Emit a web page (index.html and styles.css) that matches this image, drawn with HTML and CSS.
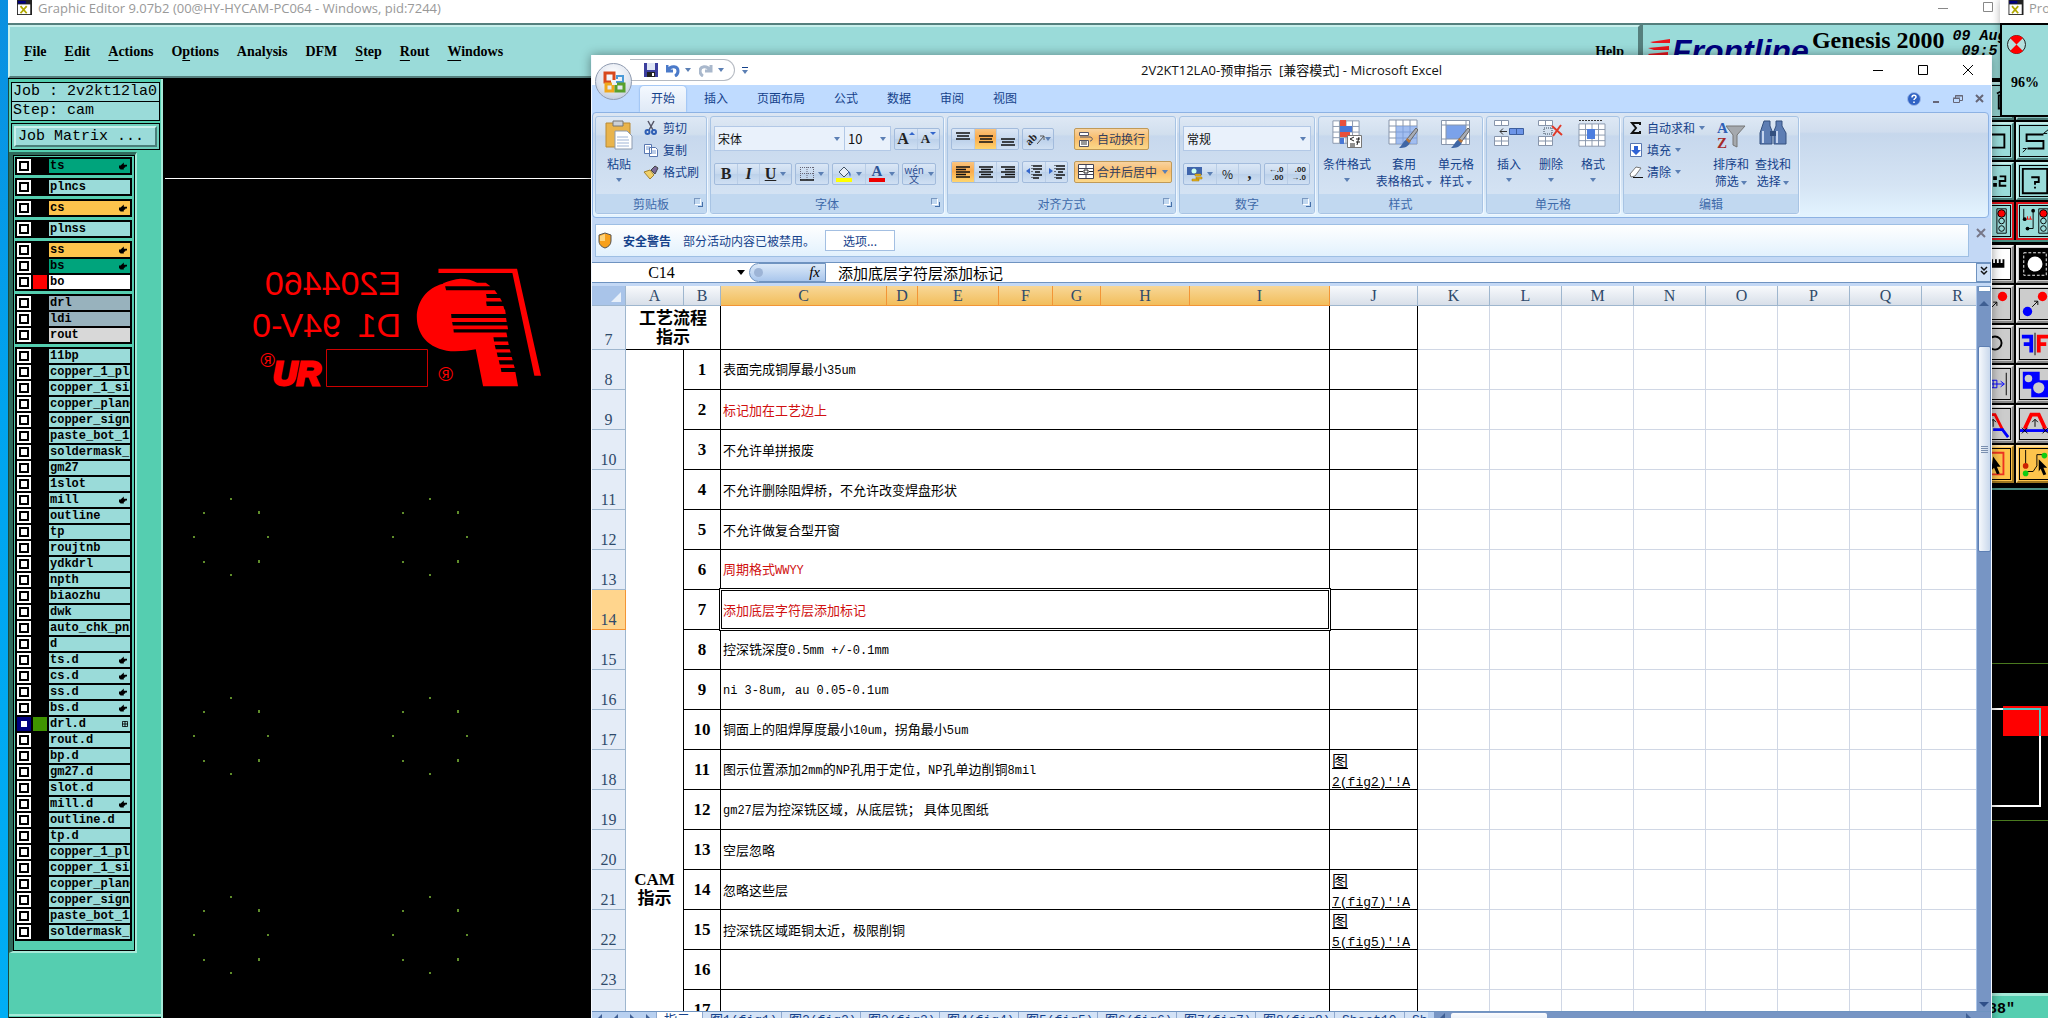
FILE: index.html
```
<!DOCTYPE html>
<html lang="zh-CN">
<head>
  <meta charset="UTF-8">
  <meta name="viewport" content="width=device-width, initial-scale=1">
  <title>2V2KT12LA0-预审指示</title>
  <link rel="stylesheet" href="styles.css">
</head>
<body>
  <svg class="defs" aria-hidden="true">
    <symbol id="hand" viewBox="0 0 10 9"><path d="M0 4h2l4-4v3h4v2H8v1H7v1H6v2H2L0 7z"/></symbol>
    <symbol id="grid" viewBox="0 0 7 7"><path d="M.5.5h6v6h-6zM3.5 0v7M0 3.5h7" fill="none" stroke="#000"/></symbol>
    <symbol id="xwin" viewBox="0 0 17 17"><path d="M0 0h17v17H0z" fill="#222"/><path d="M1 5h14v11H1z" fill="#fff"/><path d="M1 1h9v3H1z" fill="#00007f"/><path d="M4 7l7 8M11 7l-7 8" stroke="#b0a800" stroke-width="2"/></symbol>
    <symbol id="lines-left" viewBox="0 0 14 12"><path d="M0 1h14M0 3.500h10M0 6h14M0 8.500h10M0 11h14" stroke="#111" stroke-width="1.300"/></symbol>
    <symbol id="lines-center" viewBox="0 0 14 12"><path d="M0 1h14M2 3.500h10M0 6h14M2 8.500h10M0 11h14" stroke="#111" stroke-width="1.300"/></symbol>
    <symbol id="lines-right" viewBox="0 0 14 12"><path d="M0 1h14M4 3.500h10M0 6h14M4 8.500h10M0 11h14" stroke="#111" stroke-width="1.300"/></symbol>
    <symbol id="three-top" viewBox="0 0 14 16"><path d="M0 2h14M1 5h12M0 8h14" stroke="#111" stroke-width="1.500"/></symbol>
    <symbol id="three-mid" viewBox="0 0 14 16"><path d="M0 5h14M1 8h12M0 11h14" stroke="#111" stroke-width="1.500"/></symbol>
    <symbol id="three-low" viewBox="0 0 14 16"><path d="M0 8h14M1 11h12M0 14h14" stroke="#111" stroke-width="1.500"/></symbol>
    <symbol id="table" viewBox="0 0 30 28"><path d="M1 1h28v24H1z" fill="#fff" stroke="#8795ab"/><path d="M1 7h28M1 13h28M1 19h28M8 1v24M15 1v24M22 1v24" stroke="#8795ab"/></symbol>
    <symbol id="brush" viewBox="0 0 20 22"><path d="M18 1l2 2-8 11-3-2z" fill="#a9adb5" stroke="#666"/><path d="M9 12l3 3c-1 5-6 6-11 6 3-2 4-7 8-9z" fill="#3f66a5"/><path d="M9 11l4 3-2 2-3-3z" fill="#b9773b"/></symbol>
    <symbol id="holes" viewBox="190 495 82 84"><path d="M230 498h2v2h-2zM203 512h2v2h-2zM258 511h2v3h-2zM193 536h2v2h-2zM267 536h2v2h-2zM203 561h2v2h-2zM258 560h2v3h-2zM230 574h2v2h-2z" fill="#5f8d2a"/></symbol>
  </svg>

  <div class="genesis">
    <header class="title-bar">
      <svg class="app-icon"><use href="#xwin"/></svg>
      <span class="title">Graphic Editor 9.07b2 (00@HY-HYCAM-PC064 - Windows, pid:7244)</span>
      <div class="window-buttons">
        <button aria-label="Minimize"><svg width="12" height="12"><path d="M1 7.500h10" stroke="#888"/></svg></button>
        <button aria-label="Maximize"><svg width="12" height="12"><path d="M1.500 1.500h9v9h-9z" fill="none" stroke="#888"/></svg></button>
      </div>
    </header>

    <div class="top">
      <nav class="menu">
        <a href="#"><u>F</u>ile</a>
        <a href="#"><u>E</u>dit</a>
        <a href="#"><u>A</u>ctions</a>
        <a href="#">O<u>p</u>tions</a>
        <a href="#">Analysis</a>
        <a href="#">DFM</a>
        <a href="#"><u>S</u>tep</a>
        <a href="#"><u>R</u>out</a>
        <a href="#"><u>W</u>indows</a>
        <a href="#" class="help">Help</a>
      </nav>
      <div class="brand">
        <svg class="speed" width="24" height="22" viewBox="0 0 24 22"><path d="M2 3l20-3v4H5zM0 9l21-2v4H6zM0 15l20-2v4H2z" fill="#e8141c"/></svg>
        <span class="frontline">Frontline</span>
        <span class="product">Genesis 2000</span>
        <span class="date">09 Aug<br>&nbsp;09:5</span>
      </div>
    </div>

    <div class="work">
      <aside class="sidebar">
        <div class="job">
          <p>Job : 2v2kt12la0</p>
          <p>Step: cam</p>
        </div>
        <div class="matrix"><button>Job Matrix ...</button></div>
        <div class="layers">
          <div class="panel">
            <div class="set">
              <label class="layer green"><input type="checkbox"><i></i><span>ts</span><svg class="mark"><use href="#hand"/></svg></label>
            </div>
            <div class="set">
              <label class="layer"><input type="checkbox"><i></i><span>plncs</span></label>
            </div>
            <div class="set">
              <label class="layer amber"><input type="checkbox"><i></i><span>cs</span><svg class="mark"><use href="#hand"/></svg></label>
            </div>
            <div class="set">
              <label class="layer"><input type="checkbox"><i></i><span>plnss</span></label>
            </div>
            <div class="set">
              <label class="layer amber"><input type="checkbox"><i></i><span>ss</span><svg class="mark"><use href="#hand"/></svg></label>
              <label class="layer green"><input type="checkbox"><i></i><span>bs</span><svg class="mark"><use href="#hand"/></svg></label>
              <label class="layer white"><input type="checkbox"><i class="red"></i><span>bo</span></label>
            </div>
            <div class="set">
              <label class="layer slate"><input type="checkbox"><i></i><span>drl</span></label>
              <label class="layer slate"><input type="checkbox"><i></i><span>ldi</span></label>
              <label class="layer grey"><input type="checkbox"><i></i><span>rout</span></label>
            </div>
            <div class="set">
              <label class="layer"><input type="checkbox"><i></i><span>11bp</span></label>
              <label class="layer"><input type="checkbox"><i></i><span>copper_1_pla</span></label>
              <label class="layer"><input type="checkbox"><i></i><span>copper_1_sig</span></label>
              <label class="layer"><input type="checkbox"><i></i><span>copper_plane</span></label>
              <label class="layer"><input type="checkbox"><i></i><span>copper_signa</span></label>
              <label class="layer"><input type="checkbox"><i></i><span>paste_bot_1</span></label>
              <label class="layer"><input type="checkbox"><i></i><span>soldermask_b</span></label>
              <label class="layer"><input type="checkbox"><i></i><span>gm27</span></label>
              <label class="layer"><input type="checkbox"><i></i><span>1slot</span></label>
              <label class="layer"><input type="checkbox"><i></i><span>mill</span><svg class="mark"><use href="#hand"/></svg></label>
              <label class="layer"><input type="checkbox"><i></i><span>outline</span></label>
              <label class="layer"><input type="checkbox"><i></i><span>tp</span></label>
              <label class="layer"><input type="checkbox"><i></i><span>roujtnb</span></label>
              <label class="layer"><input type="checkbox"><i></i><span>ydkdrl</span></label>
              <label class="layer"><input type="checkbox"><i></i><span>npth</span></label>
              <label class="layer"><input type="checkbox"><i></i><span>biaozhu</span></label>
              <label class="layer"><input type="checkbox"><i></i><span>dwk</span></label>
              <label class="layer"><input type="checkbox"><i></i><span>auto_chk_pnl</span></label>
              <label class="layer"><input type="checkbox"><i></i><span>d</span></label>
              <label class="layer"><input type="checkbox"><i></i><span>ts.d</span><svg class="mark"><use href="#hand"/></svg></label>
              <label class="layer"><input type="checkbox"><i></i><span>cs.d</span><svg class="mark"><use href="#hand"/></svg></label>
              <label class="layer"><input type="checkbox"><i></i><span>ss.d</span><svg class="mark"><use href="#hand"/></svg></label>
              <label class="layer"><input type="checkbox"><i></i><span>bs.d</span><svg class="mark"><use href="#hand"/></svg></label>
              <label class="layer"><input type="checkbox" checked><i class="lime"></i><span>drl.d</span><svg class="mark small"><use href="#grid"/></svg></label>
              <label class="layer"><input type="checkbox"><i></i><span>rout.d</span></label>
              <label class="layer"><input type="checkbox"><i></i><span>bp.d</span></label>
              <label class="layer"><input type="checkbox"><i></i><span>gm27.d</span></label>
              <label class="layer"><input type="checkbox"><i></i><span>slot.d</span></label>
              <label class="layer"><input type="checkbox"><i></i><span>mill.d</span><svg class="mark"><use href="#hand"/></svg></label>
              <label class="layer"><input type="checkbox"><i></i><span>outline.d</span></label>
              <label class="layer"><input type="checkbox"><i></i><span>tp.d</span></label>
              <label class="layer"><input type="checkbox"><i></i><span>copper_1_pla</span></label>
              <label class="layer"><input type="checkbox"><i></i><span>copper_1_sig</span></label>
              <label class="layer"><input type="checkbox"><i></i><span>copper_plane</span></label>
              <label class="layer"><input type="checkbox"><i></i><span>copper_signa</span></label>
              <label class="layer"><input type="checkbox"><i></i><span>paste_bot_1</span></label>
              <label class="layer"><input type="checkbox"><i></i><span>soldermask_b</span></label>
            </div>
          </div>
        </div>
        <div class="sidebar-end"></div>
      </aside>

      <main class="canvas">
        <svg width="428" height="939" viewBox="163 79 428 939">
          <path d="M165 178.500h426" stroke="#fff"/>
          <g fill="#f00" font-family="Liberation Sans, sans-serif">
            <g transform="translate(401 0) scale(-1 1)" font-size="34">
              <text x="0" y="295">E204460</text>
              <text x="0" y="337">D1</text>
              <text x="60" y="337">94V-0</text>
            </g>
            <g transform="translate(453 0) scale(-1 1)" font-size="20">
              <text x="0" y="381">®</text>
              <text x="178" y="367">®</text>
            </g>
            <text x="273" y="385" font-size="33" font-weight="bold" font-style="italic" stroke="#f00" stroke-width="3">UR</text>
          </g>
          <path d="M326.500 349.500h101v37h-101z" fill="none" stroke="#c00"/>
          <!-- striped head and bent arm of the board logo -->
          <g transform="translate(230 250) scale(.333)" fill="#f00">
            <path d="M626 56h236l72 322h-20L848 69H626z"/>
            <path d="M640 100c20-8 35-13 52-14 20 0 38 5 50 12H645zM640 101c-50 12-79 55-79 100 0 60 45 103 115 103 24 0 45-3 62-6l22 111h105l-8-43h-42l-2-12h42l-3-10h-42l-3-13h42l-3-10h-42l-3-13h42l-3-10h-42l-3-13h42l-2-10h-42l-2-13h42l-3-14H672l-1-10h164l-2-11H669l-2-11h164l-2-12H665l-1-12h164l-2-13H663h161l-3-11h-50l-2-13h48l-6-11h-40l-2-12h34l-8-11H649l-3-12h136l-14-11H642z"/>
          </g>
          <use href="#holes" x="190" y="495" width="82" height="84"/>
          <use href="#holes" x="389" y="495" width="82" height="84"/>
          <use href="#holes" x="190" y="694" width="82" height="84"/>
          <use href="#holes" x="389" y="694" width="82" height="84"/>
          <use href="#holes" x="190" y="893" width="82" height="84"/>
          <use href="#holes" x="389" y="893" width="82" height="84"/>
        </svg>
      </main>

      <aside class="tools">
        <div class="tool-grid">
          <button aria-label="Zoom out"><svg viewBox="0 0 32 32"><path d="M20 10h8v14h-8zM18 8l12-6" fill="none" stroke="#000" stroke-width="2"/></svg></button>
          <button aria-label="Zoom in"><svg viewBox="0 0 32 32"><path d="M6 10h20v14H6z" fill="none" stroke="#000" stroke-width="2"/></svg></button>
          <button aria-label="Outline"><svg viewBox="0 0 32 32"><path d="M8 9h18v14H8z" fill="none" stroke="#000" stroke-width="2"/></svg></button>
          <button aria-label="Path"><svg viewBox="0 0 32 32"><path d="M25 9H7v7h18v8H8" fill="none" stroke="#000" stroke-width="2"/><path d="M25 8l5-4M25 8h4M7 24l-4 4M7 24H3" stroke="#000"/></svg></button>
          <button aria-label="Scale"><svg viewBox="0 0 32 32"><path d="M15 12h2v2h-2zM15 19h2v2h-2zM21 11h6v5h-6v5h7" fill="none" stroke="#000" stroke-width="2"/></svg></button>
          <button aria-label="Query"><svg viewBox="0 0 32 32"><path d="M3 3h26v26H3zM12 12h8v5h-4v3M16 22v2" fill="none" stroke="#000" stroke-width="2"/></svg></button>
          <button class="alert" aria-label="Signals"><svg viewBox="0 0 32 32"><path d="M18 3h10v26H18z" fill="none" stroke="#000"/><circle cx="23" cy="8" r="4" fill="red" stroke="#000"/><circle cx="23" cy="16" r="3" fill="none" stroke="#000"/><circle cx="23" cy="24" r="3" fill="none" stroke="#000"/></svg></button>
          <button class="alert" aria-label="Net signals"><svg viewBox="0 0 32 32"><path d="M20 3h10v26H20z" fill="none" stroke="#000"/><circle cx="25" cy="8" r="4" fill="red" stroke="#000"/><circle cx="25" cy="16" r="3" fill="none" stroke="#000"/><circle cx="25" cy="24" r="3" fill="none" stroke="#000"/><path d="M4 3v11M14 5v19H8" fill="none" stroke="#000"/><circle cx="5" cy="14" r="2"/><circle cx="14" cy="5" r="2"/><circle cx="8" cy="24" r="2"/><path d="M7 14h6M8 11v3M11 11v3" stroke="red"/></svg></button>
        </div>
        <div class="tool-grid plain">
          <button aria-label="Measure"><svg viewBox="0 0 32 32"><path d="M0 0h32v32H0z" fill="#fff"/><path d="M8 20V11h2v4h2v-4h2v4h2v-4h2v4h2v-4h2v4h2v-4h2v9z"/></svg></button>
          <button aria-label="Pad"><svg viewBox="0 0 32 32"><path d="M0 0h32v32H0z"/><path d="M4 4h24v24H4z" fill="none" stroke="#fff" stroke-dasharray="3 2"/><circle cx="16" cy="16" r="8" fill="#fff"/></svg></button>
          <button aria-label="Move"><svg viewBox="0 0 32 32"><circle cx="24" cy="8" r="5" fill="red"/><path d="M12 20l6-6M14 14h4v4" fill="none" stroke="#000"/></svg></button>
          <button aria-label="Copy"><svg viewBox="0 0 32 32"><circle cx="24" cy="8" r="5" fill="red"/><circle cx="8" cy="24" r="5" fill="#00f"/><path d="M13 19l6-6M15 13h4v4" fill="none" stroke="#000"/></svg></button>
          <button aria-label="Rotate"><svg viewBox="0 0 32 32"><circle cx="16" cy="15" r="7" fill="none" stroke="#000" stroke-width="2"/></svg></button>
          <button aria-label="Mirror"><svg viewBox="0 0 32 32"><path d="M2 8h10v17M12 16H4" fill="none" stroke="#00f" stroke-width="4"/><path d="M16 4v24" stroke="#000"/><path d="M30 8H20v17M20 16h8" fill="none" stroke="red" stroke-width="4"/></svg></button>
          <button aria-label="Stretch"><svg viewBox="0 0 32 32"><path d="M10 12h8v8h-8zM18 16h7M22 13l4 3-4 3M14 12v8M10 16h8" fill="none" stroke="#00f"/><path d="M28 4v24" stroke="#000"/></svg></button>
          <button aria-label="Merge"><svg viewBox="0 0 32 32"><path d="M3 3h18v9h9v18H12v-9H3z" fill="#00f"/><circle cx="9" cy="10" r="4" fill="#ccc"/><circle cx="20" cy="20" r="6" fill="#ccc"/></svg></button>
          <button aria-label="Contour"><svg viewBox="0 0 32 32"><path d="M2 22L10 6h6l8 16" fill="none" stroke="red" stroke-width="3"/><path d="M14 22h10l6 8" fill="none" stroke="#00f" stroke-width="3"/><path d="M14 19v-8M11 14l3-3 3 3" fill="none" stroke="#000"/></svg></button>
          <button aria-label="Raise"><svg viewBox="0 0 32 32"><path d="M0 23h32" stroke="#00f" stroke-width="3"/><path d="M5 21L12 6h8l7 15" fill="none" stroke="red" stroke-width="4"/><path d="M16 19v-8M13 14l3-3 3 3M2 20l6 6M8 20l-6 6M24 20l6 6M30 20l-6 6" fill="none" stroke="#000"/></svg></button>
          <button class="gold" aria-label="Select"><svg viewBox="0 0 32 32"><path d="M5 4h20v23H5z" fill="none" stroke="#e32" stroke-width="2"/><path d="M14 8l8 11h-4l3 7-3 1-3-7-3 3z"/></svg></button>
          <button class="gold" aria-label="Route"><svg viewBox="0 0 32 32"><path d="M6 1v17M26 6h-8v12l-4 6H6" fill="none" stroke="#000"/><circle cx="6" cy="18" r="3" fill="#c20"/><circle cx="6" cy="26" r="3" fill="#1c1"/><circle cx="26" cy="7" r="3" fill="#1c1"/><path d="M20 11l9 9h-4l3 7-3 1-3-7-2 3z"/></svg></button>
        </div>
        <div class="overview">
          <svg width="72" height="503" viewBox="1976 490 72 503">
            <path d="M1976 663.500h72M1976 820.500h72" stroke="#4a7a1f"/>
            <path d="M2003 706h45v30h-45z" fill="#f00"/>
            <path d="M1976 709h64v97h-64" fill="none" stroke="#fff" stroke-width="2"/>
            <path d="M2003 709h37v27" fill="none" stroke="#4cc9c4" stroke-width="2"/>
          </svg>
        </div>
        <footer class="status">.88"</footer>
      </aside>
    </div>
  </div>

  <div class="progress">
    <header class="title-bar">
      <svg class="app-icon"><use href="#xwin"/></svg>
      <span class="title">Progress</span>
    </header>
    <div class="progress-body">
      <svg width="19" height="19" viewBox="0 0 19 19"><circle cx="9.500" cy="9.500" r="9" fill="#b5e0de" stroke="#222"/><path d="M9.500 9.500L3 3a9 9 0 0 1 13 0zM9.500 9.500L3 16a9 9 0 0 0 13 0z" fill="red"/></svg>
      <p>96%</p>
    </div>
  </div>

  <div class="excel">
    <header class="excel-title">
      <button class="office" aria-label="Office">
        <svg width="24" height="24" viewBox="0 0 24 24" fill="none" stroke-width="3"><path d="M12 10V3H3v9h6" stroke="#d8481c"/><path d="M15 9V6h6v6h-7" stroke="#4a9ad8" stroke-width="2"/><path d="M10 14H4v7h7v-6" stroke="#f0a81c"/><path d="M14 15v6h8v-7h-7" stroke="#58a02c"/></svg>
      </button>
      <div class="quick">
        <button aria-label="保存"><svg width="14" height="14"><path d="M0 0h14v14H0z" fill="#3c3f9e"/><path d="M3 0h8v7H3z" fill="#dfe6f5"/><path d="M3 9h8v5H3z" fill="#222"/><path d="M8 10h2v3H8z" fill="#fff"/></svg></button>
        <button aria-label="撤销"><svg width="14" height="14"><path d="M1 2v6h6M2 7c3-5 10-4 10 1 0 2-1 4-3 5" fill="none" stroke="#4b7ac9" stroke-width="3"/></svg><i class="caret"></i></button>
        <button aria-label="恢复"><svg width="14" height="14"><path d="M12 2v6H6M11 7C8 2 1 3 1 8c0 2 1 4 3 5" fill="none" stroke="#a9b8cc" stroke-width="3"/></svg><i class="caret"></i></button>
      </div>
      <button class="more" aria-label="更多"><i></i><i class="caret"></i></button>
      <h1>2V2KT12LA0-预审指示&nbsp; [兼容模式] - Microsoft Excel</h1>
      <div class="window-buttons">
        <button aria-label="最小化"><svg width="12" height="12"><path d="M1 6.500h10" stroke="#000"/></svg></button>
        <button aria-label="最大化"><svg width="12" height="12"><path d="M1.500 1.500h9v9h-9z" fill="none" stroke="#000"/></svg></button>
        <button aria-label="关闭"><svg width="12" height="12"><path d="M1 1l10 10M11 1L1 11" stroke="#000"/></svg></button>
      </div>
    </header>

    <nav class="tabs">
      <a href="#" class="active">开始</a>
      <a href="#">插入</a>
      <a href="#">页面布局</a>
      <a href="#">公式</a>
      <a href="#">数据</a>
      <a href="#">审阅</a>
      <a href="#">视图</a>
      <div class="doc-buttons">
        <button aria-label="帮助"><svg width="14" height="14"><circle cx="7" cy="7" r="6.500" fill="#2f62c4" stroke="#9db9e8"/><path d="M5 5.500c0-3 4-3 4-.5 0 1.500-2 1.500-2 3M7 9.500v1.500" fill="none" stroke="#fff" stroke-width="1.500"/></svg></button>
        <button aria-label="最小化工作簿"><svg width="10" height="10"><path d="M2 8h6" stroke="#667" stroke-width="2"/></svg></button>
        <button aria-label="还原工作簿"><svg width="10" height="10"><path d="M.5 4.500h6v4h-6zM2.500 4V1.500h7v5H7M2 2h8M0 4h7" fill="none" stroke="#667"/></svg></button>
        <button aria-label="关闭工作簿"><svg width="10" height="10"><path d="M1 1l7 7M8 1L1 8" stroke="#667" stroke-width="2"/></svg></button>
      </div>
    </nav>

    <div class="ribbon">
      <section class="group clipboard">
        <div class="group-body">
          <button class="big"><svg width="30" height="32" viewBox="0 0 30 32"><path d="M2 4h24v24H2z" fill="#e9b44c" stroke="#b98a35"/><path d="M9 2h10v5H9z" fill="#ccd1d8" stroke="#777"/><path d="M11 12h12l5 5v13H11z" fill="#fff" stroke="#8d9bb0"/><path d="M13 18h11M13 21h12M13 24h12M13 27h12" stroke="#9fb4d6"/></svg>粘贴<i class="caret"></i></button>
          <div class="stack">
            <button><svg width="16" height="16"><path d="M5 1l5 9M11 1L6 10" stroke="#556" stroke-width="1.500"/><circle cx="4.500" cy="12" r="2" fill="none" stroke="#2f5fb5" stroke-width="2"/><circle cx="11" cy="12" r="2" fill="none" stroke="#2f5fb5" stroke-width="2"/></svg>剪切</button>
            <button><svg width="16" height="16"><path d="M1.500 2.500h7v9h-7zM6.500 5.500h6l2 2v7h-8z" fill="#fff" stroke="#5877b0"/><path d="M8 9h5M8 11h5M3 5h4M3 7h3" stroke="#7b9bd0"/></svg>复制</button>
            <button><svg width="16" height="16"><path d="M1 8l6-2 4 5-4 4z" fill="#f0d068" stroke="#a08030"/><path d="M8 6l4-4 3 2-3 6z" fill="#7a6a9a" stroke="#444"/></svg>格式刷</button>
          </div>
        </div>
        <footer>剪贴板<i class="launch"></i></footer>
      </section>

      <section class="group font">
        <div class="group-body rows">
          <div class="line">
            <div class="combos">
              <label class="combo wide"><select aria-label="字体"><option>宋体</option></select></label>
              <label class="combo narrow"><select aria-label="字号"><option>10</option></select></label>
            </div>
            <div class="set-buttons">
              <button class="serif resize">A<i class="tip"></i></button>
              <button class="serif resize lesser">A<i class="tip flip"></i></button>
            </div>
          </div>
          <div class="line">
            <div class="set-buttons">
              <button class="serif"><b>B</b></button>
              <button class="serif"><em>I</em></button>
              <button class="serif long"><u>U</u><i class="caret"></i></button>
            </div>
            <div class="set-buttons">
              <button class="long" aria-label="边框"><svg width="14" height="14"><path d="M.5 0v13M7 0v13M13.500 0v13M0 .5h14M0 6.500h14" stroke="#667" stroke-dasharray="1 1"/><path d="M0 13h14" stroke="#111" stroke-width="1.500"/></svg><i class="caret"></i></button>
            </div>
            <div class="set-buttons">
              <button class="long" aria-label="填充颜色"><svg width="16" height="17"><path d="M3 7l5-5 5 5-5 5z" fill="#e8eef8" stroke="#456"/><path d="M12 6c3 1 3 4 2 6z" fill="#3d6cc0"/><path d="M0 13h16v4H0z" fill="#ff0"/></svg><i class="caret"></i></button>
              <button class="font-color" aria-label="字体颜色"><span>A</span><i class="caret"></i></button>
            </div>
            <div class="set-buttons">
              <button class="wen"><span>wén<br>文</span><i class="caret"></i></button>
            </div>
          </div>
        </div>
        <footer>字体<i class="launch"></i></footer>
      </section>

      <section class="group align">
        <div class="group-body">
          <div class="rows">
            <div class="line">
              <div class="set-buttons">
                <button aria-label="顶端对齐"><svg width="14" height="16"><use href="#three-top"/></svg></button>
                <button class="on" aria-label="垂直居中"><svg width="14" height="16"><use href="#three-mid"/></svg></button>
                <button aria-label="底端对齐"><svg width="14" height="16"><use href="#three-low"/></svg></button>
              </div>
              <div class="set-buttons">
                <button class="orient"><span>ab</span><svg width="8" height="12"><path d="M0 11l7-8M3 3h4v4" fill="none" stroke="#555"/></svg><i class="caret"></i></button>
              </div>
            </div>
            <div class="line">
              <div class="set-buttons">
                <button class="on" aria-label="左对齐"><svg width="14" height="12"><use href="#lines-left"/></svg></button>
                <button aria-label="居中"><svg width="14" height="12"><use href="#lines-center"/></svg></button>
                <button aria-label="右对齐"><svg width="14" height="12"><use href="#lines-right"/></svg></button>
              </div>
              <div class="set-buttons">
                <button aria-label="减少缩进"><svg width="16" height="14"><path d="M7 1h9M7 4h9M9 7h5M7 10h9M7 13h6" stroke="#111" stroke-width="1.500"/><path d="M0 6l4-3v6z" fill="#36c"/><path d="M6 0v14" stroke="#111" stroke-dasharray="1 2"/></svg></button>
                <button aria-label="增加缩进"><svg width="16" height="14"><path d="M7 1h9M7 4h9M9 7h5M7 10h9M7 13h6" stroke="#111" stroke-width="1.500"/><path d="M4 6L0 3v6z" fill="#36c"/><path d="M6 0v14" stroke="#111" stroke-dasharray="1 2"/></svg></button>
              </div>
            </div>
          </div>
          <div class="rows merge">
            <div class="line"><button class="hot"><svg width="16" height="16"><path d="M1.500 1.500h9v3h-9zM1.500 9.500h9v6h-9z" fill="#fff" stroke="#556"/><path d="M3 11h6M3 13h6" stroke="#333"/><path d="M2 6h10c3 0 3 4 0 4" fill="none" stroke="#556"/></svg>自动换行</button></div>
            <div class="line"><button class="hot"><svg width="16" height="16"><path d="M.5.5h15v14H.5zM.5 4.500h15M.5 10.500h15M8 0v4M8 10v5" fill="#fff" stroke="#445"/><path d="M1 7.500h4M11 7.500h4M6 6h4v3H6z" fill="none" stroke="#222"/></svg>合并后居中<i class="caret"></i></button></div>
          </div>
        </div>
        <footer>对齐方式<i class="launch"></i></footer>
      </section>

      <section class="group number">
        <div class="group-body rows">
          <div class="line">
            <label class="combo full"><select aria-label="数字格式"><option>常规</option></select></label>
          </div>
          <div class="line">
            <div class="set-buttons">
              <button class="long" aria-label="会计数字格式"><svg width="16" height="16"><path d="M0 1h15v8H0z" fill="#3f65ac"/><circle cx="7" cy="5" r="2.500" fill="#cfe"/><path d="M8 8h6v2H8zM9 11h6v2H9zM5 13h7v2H5z" fill="#e5b321" stroke="#a57800" stroke-width=".5"/></svg><i class="caret"></i></button>
              <button>%</button>
              <button class="serif">,</button>
            </div>
            <div class="set-buttons">
              <button class="dec">←.0<br>.00</button>
              <button class="dec">.00<br>→.0</button>
            </div>
          </div>
        </div>
        <footer>数字<i class="launch"></i></footer>
      </section>

      <section class="group styles">
        <div class="group-body">
          <button class="big"><svg width="30" height="30"><use href="#table" width="28" height="28"/><path d="M8 1h6v6H8zM8 13h10v5H8z" fill="#e8503c"/><path d="M8 7h12v6H8zM8 19h4v6H8z" fill="#4877d6"/><path d="M15.500 16.500h14v12h-14z" fill="#fff" stroke="#777"/><path d="M22 18l-4 2 4 2M18 25h5M18 27h5M24 20h4M24 23h4M27 18l-2 8" fill="none" stroke="#222"/></svg>条件格式<i class="caret"></i></button>
          <button class="big"><svg width="32" height="30"><use href="#table" width="30" height="28"/><path d="M8 7h21v18H8z" fill="#7ba2ea" opacity=".7"/><use href="#brush" x="10" y="8" width="20" height="22"/></svg>套用<span>表格格式 <i class="caret"></i></span></button>
          <button class="big"><svg width="32" height="30"><path d="M1.500 1.500h28v24h-28z" fill="#fff" stroke="#8795ab"/><path d="M6 6h20v14H6z" fill="#7ba2ea"/><path d="M6 1v24M26 1v24M1 6h28M1 20h28" stroke="#8795ab"/><use href="#brush" x="10" y="8" width="20" height="22"/></svg>单元格<span>样式 <i class="caret"></i></span></button>
        </div>
        <footer>样式</footer>
      </section>

      <section class="group cells">
        <div class="group-body">
          <button class="big"><svg width="30" height="30"><path d="M.5 1.500h14v5H.5zM.5 17.500h14v9H.5zM7.500 1v5M7.500 17v10M0 22h15" fill="#fff" stroke="#8795ab"/><path d="M15.500 9.500h14v6h-14zM22.500 9v6" fill="#6d95e8" stroke="#3d5f9f"/><path d="M13 12.500H6M9 9.500l-3 3 3 3" fill="none" stroke="#333"/></svg>插入<i class="caret"></i></button>
          <button class="big"><svg width="30" height="30"><path d="M2.500 1.500h14v5h-14zM2.500 17.500h14v9h-14zM9.500 1v5M9.500 17v10M2 22h15" fill="#fff" stroke="#8795ab"/><path d="M8 9h8v6H8z" fill="none" stroke="#345" stroke-dasharray="1 1"/><path d="M16 7l10 9M25 6l-8 11" stroke="#e03a2a" stroke-width="2"/></svg>删除<i class="caret"></i></button>
          <button class="big"><svg width="32" height="30"><path d="M2 1.500h24" stroke="#333" stroke-dasharray="2 1"/><use href="#table" y="4" width="30" height="26"/><path d="M10 10h8v10h-8z" fill="#4d7fe0"/></svg>格式<i class="caret"></i></button>
        </div>
        <footer>单元格</footer>
      </section>

      <section class="group edit">
        <div class="group-body">
          <div class="stack">
            <button><svg width="14" height="14"><path d="M11 4V2H3l4 5-4 5h8v-2" fill="none" stroke="#111" stroke-width="2"/></svg>自动求和<i class="caret"></i></button>
            <button><svg width="14" height="14"><path d="M1.500.5h11v13h-11z" fill="#fff" stroke="#5877b0"/><path d="M5 3h4v4h3l-5 5-5-5h3z" fill="#2f62d4"/></svg>填充<i class="caret"></i></button>
            <button><svg width="14" height="14"><path d="M1 9l6-7 5 1-6 8-4 1z" fill="#fff" stroke="#777"/><path d="M4 12.500h10" stroke="#111"/></svg>清除<i class="caret"></i></button>
          </div>
          <button class="big"><svg width="30" height="30" viewBox="0 0 30 30"><text x="1" y="13" class="sort-a">A</text><text x="1" y="28" class="sort-z">Z</text><path d="M10 6h19l-8 9v12l-4-2V15z" fill="#a5a9ae" stroke="#777"/></svg>排序和<span>筛选 <i class="caret"></i></span></button>
          <button class="big"><svg width="30" height="30"><path d="M6 2h6v5l2 5v13H2V14zM18 2h6v5l4 7v11H16V12l2-5z" fill="#5d7db3" stroke="#34507f"/><path d="M12 12h6v5h-6z" fill="#34507f"/><path d="M5 12v12M19 12v12" stroke="#c5d4ee" stroke-width="2"/></svg>查找和<span>选择 <i class="caret"></i></span></button>
        </div>
        <footer>编辑</footer>
      </section>
    </div>

    <div class="warning">
      <div class="warning-box">
        <svg width="14" height="17" viewBox="0 0 14 17"><path d="M7 1l6 2v6c0 4-3 6-6 7-3-1-6-3-6-7V3z" fill="#f7a01c" stroke="#555"/><path d="M7 2L2 4v5h5z" fill="#fdd37c"/></svg>
        <b>安全警告</b>
        <span>部分活动内容已被禁用。</span>
        <button>选项...</button>
      </div>
      <button class="dismiss" aria-label="关闭此消息"><svg width="10" height="10"><path d="M1 1l8 8M9 1L1 9" stroke="#778" stroke-width="2"/></svg></button>
    </div>

    <div class="formula">
      <div class="name-box"><input type="text" value="C14" aria-label="名称框"><i class="caret"></i></div>
      <div class="fx"><i></i><em>fx</em></div>
      <input type="text" class="formula-text" value="添加底层字符层添加标记" aria-label="编辑栏">
      <button aria-label="展开编辑栏"><svg width="8" height="10"><path d="M1 1l3 3 3-3M1 5l3 3 3-3" fill="none" stroke="#111" stroke-width="1.500"/></svg></button>
    </div>

    <div class="sheet">
      <div class="cells-view">
        <table>
          <colgroup>
            <col class="w-head"><col class="w-a"><col class="w-b"><col class="w-c"><col class="w-d"><col class="w-e"><col class="w-f"><col class="w-g"><col class="w-h"><col class="w-i"><col class="w-j"><col span="8" class="w-k">
          </colgroup>
          <thead>
            <tr><th class="corner"><i></i></th><th>A</th><th>B</th><th class="sel">C</th><th class="sel">D</th><th class="sel">E</th><th class="sel">F</th><th class="sel">G</th><th class="sel">H</th><th class="sel">I</th><th>J</th><th>K</th><th>L</th><th>M</th><th>N</th><th>O</th><th>P</th><th>Q</th><th>R</th></tr>
          </thead>
          <tbody>
            <tr class="first"><th>7</th><td colspan="2" class="ink head">工艺流程<br>指示</td><td colspan="7" class="ink"></td><td class="ink"></td><td></td><td></td><td></td><td></td><td></td><td></td><td></td><td></td></tr>
            <tr><th>8</th><td rowspan="17" class="ink head cam">CAM<br>指示</td><td class="ink no">1</td><td colspan="7" class="ink">表面完成铜厚最小<span>35um</span></td><td class="ink"></td><td></td><td></td><td></td><td></td><td></td><td></td><td></td><td></td></tr>
            <tr><th>9</th><td class="ink no">2</td><td colspan="7" class="ink warn">标记加在工艺边上</td><td class="ink"></td><td></td><td></td><td></td><td></td><td></td><td></td><td></td><td></td></tr>
            <tr><th>10</th><td class="ink no">3</td><td colspan="7" class="ink">不允许单拼报废</td><td class="ink"></td><td></td><td></td><td></td><td></td><td></td><td></td><td></td><td></td></tr>
            <tr><th>11</th><td class="ink no">4</td><td colspan="7" class="ink">不允许删除阻焊桥，不允许改变焊盘形状</td><td class="ink"></td><td></td><td></td><td></td><td></td><td></td><td></td><td></td><td></td></tr>
            <tr><th>12</th><td class="ink no">5</td><td colspan="7" class="ink">不允许做复合型开窗</td><td class="ink"></td><td></td><td></td><td></td><td></td><td></td><td></td><td></td><td></td></tr>
            <tr><th>13</th><td class="ink no">6</td><td colspan="7" class="ink warn">周期格式<span>WWYY</span></td><td class="ink"></td><td></td><td></td><td></td><td></td><td></td><td></td><td></td><td></td></tr>
            <tr><th class="sel">14</th><td class="ink no">7</td><td colspan="7" class="ink warn active">添加底层字符层添加标记</td><td class="ink"></td><td></td><td></td><td></td><td></td><td></td><td></td><td></td><td></td></tr>
            <tr><th>15</th><td class="ink no">8</td><td colspan="7" class="ink">控深铣深度<span>0.5mm +/-0.1mm</span></td><td class="ink"></td><td></td><td></td><td></td><td></td><td></td><td></td><td></td><td></td></tr>
            <tr><th>16</th><td class="ink no">9</td><td colspan="7" class="ink"><span>ni 3-8um, au 0.05-0.1um</span></td><td class="ink"></td><td></td><td></td><td></td><td></td><td></td><td></td><td></td><td></td></tr>
            <tr><th>17</th><td class="ink no">10</td><td colspan="7" class="ink">铜面上的阻焊厚度最小<span>10um</span>，拐角最小<span>5um</span></td><td class="ink"></td><td></td><td></td><td></td><td></td><td></td><td></td><td></td><td></td></tr>
            <tr><th>18</th><td class="ink no">11</td><td colspan="7" class="ink">图示位置添加<span>2mm</span>的<span>NP</span>孔用于定位，<span>NP</span>孔单边削铜<span>8mil</span></td><td class="ink link"><a href="#fig2">图<br><span>2(fig2)'!A</span></a></td><td></td><td></td><td></td><td></td><td></td><td></td><td></td><td></td></tr>
            <tr><th>19</th><td class="ink no">12</td><td colspan="7" class="ink"><span>gm27</span>层为控深铣区域，从底层铣； 具体见图纸</td><td class="ink"></td><td></td><td></td><td></td><td></td><td></td><td></td><td></td><td></td></tr>
            <tr><th>20</th><td class="ink no">13</td><td colspan="7" class="ink">空层忽略</td><td class="ink"></td><td></td><td></td><td></td><td></td><td></td><td></td><td></td><td></td></tr>
            <tr><th>21</th><td class="ink no">14</td><td colspan="7" class="ink">忽略这些层</td><td class="ink link"><a href="#fig7">图<br><span>7(fig7)'!A</span></a></td><td></td><td></td><td></td><td></td><td></td><td></td><td></td><td></td></tr>
            <tr><th>22</th><td class="ink no">15</td><td colspan="7" class="ink">控深铣区域距铜太近，极限削铜</td><td class="ink link"><a href="#fig5">图<br><span>5(fig5)'!A</span></a></td><td></td><td></td><td></td><td></td><td></td><td></td><td></td><td></td></tr>
            <tr><th>23</th><td class="ink no">16</td><td colspan="7" class="ink"></td><td class="ink"></td><td></td><td></td><td></td><td></td><td></td><td></td><td></td><td></td></tr>
            <tr><th>24</th><td class="ink no">17</td><td colspan="7" class="ink"></td><td class="ink"></td><td></td><td></td><td></td><td></td><td></td><td></td><td></td><td></td></tr>
          </tbody>
        </table>
      </div>
      <div class="v-scroll">
        <i class="split"></i>
        <i class="arrow up"></i>
        <div class="v-thumb"><i></i></div>
        <i class="arrow down"></i>
      </div>
    </div>

    <div class="sheet-tabs">
      <div class="steps"><i></i><i></i><i></i><i></i></div>
      <a href="#" class="active">指示</a>
      <a href="#">图1(fig1)</a>
      <a href="#">图2(fig2)</a>
      <a href="#">图3(fig3)</a>
      <a href="#">图4(fig4)</a>
      <a href="#">图5(fig5)</a>
      <a href="#">图6(fig6)</a>
      <a href="#">图7(fig7)</a>
      <a href="#">图8(fig8)</a>
      <a href="#" class="plain-tab">Sheet10</a>
      <a href="#" class="cut">Sh</a>
      <div class="h-scroll"><i class="arrow left"></i><div class="h-thumb"></div><i class="arrow right"></i></div>
    </div>
  </div>
</body>
</html>
```

FILE: styles.css
```
* {
  box-sizing: border-box;
}

body {
  margin: 0;
  height: 100vh;
  overflow: hidden;
  position: relative;
  background: linear-gradient(#0a8fe0, #00a4ef 40%, #00aef5);
  font-family: "Noto Sans CJK SC", sans-serif;
  font-size: 12px;
}

button,
input,
select {
  margin: 0;
  padding: 0;
  border: none;
  background: none;
  font: inherit;
  color: inherit;
}

p,
h1 {
  margin: 0;
}

a {
  color: inherit;
  text-decoration: none;
}

.defs {
  display: none;
}

.caret {
  flex: none;
  display: inline-block;
  width: 0;
  height: 0;
  border: 3px solid transparent;
  border-top: 4px solid #5b7fb4;
  border-bottom: 0;
  vertical-align: middle;
}

/* Genesis window */

.genesis {
  position: absolute;
  top: 0;
  right: 0;
  bottom: 0;
  left: 8px;
  display: flex;
  flex-direction: column;
  background: #55ceb0;
}

.title-bar {
  flex: none;
  height: 23px;
  padding-left: 8px;
  background: #fff;
  display: flex;
  align-items: flex-start;
  gap: 5px;
  overflow: hidden;
}

.title-bar .app-icon {
  flex: none;
  width: 17px;
  height: 15px;
}

.title-bar .title {
  color: #999;
  font-family: "Open Sans", sans-serif;
  font-size: 13px;
  line-height: 16px;
  white-space: nowrap;
}

.window-buttons {
  margin-left: auto;
  display: flex;
}

.window-buttons button {
  width: 45px;
  display: flex;
  justify-content: center;
  align-items: center;
}

.genesis .window-buttons {
  margin-right: 38px;
}

.genesis .window-buttons button {
  height: 14px;
}

.top {
  flex: none;
  height: 56px;
  display: flex;
  background: #557f7d;
  gap: 3px;
  border-top: 2px solid #557f7d;
  border-bottom: 1px solid #000;
}

.menu {
  flex: 1;
  padding: 0 14px;
  background: #9adbd9;
  border: 2px solid #c8f0ec;
  border-right-color: #557f7d;
  border-bottom-color: #557f7d;
  display: flex;
  align-items: center;
  gap: 18px;
  font-family: "Liberation Serif", serif;
  font-size: 14px;
  font-weight: bold;
}

.menu u {
  text-underline-offset: 4px;
}

.menu .help {
  margin-left: auto;
}

.brand {
  width: 405px;
  padding-left: 5px;
  background: #9adbd9;
  display: flex;
  align-items: flex-start;
  white-space: nowrap;
}

.brand .speed {
  margin-top: 14px;
}

.frontline {
  margin: 8px 3px 0 0;
  color: #00007f;
  font: italic bold 32px/36px "Liberation Sans", sans-serif;
}

.product {
  margin: 1px 8px 0 0;
  font: bold 24px/28px "Liberation Serif", serif;
}

.date {
  margin-top: 4px;
  font: italic bold 15px/15px "Liberation Mono", monospace;
}

.work {
  flex: 1;
  min-height: 0;
  display: flex;
}

.sidebar {
  flex: none;
  width: 155px;
  border-left: 1px solid #1d4a40;
  border-right: 2px solid #a5ead8;
  display: flex;
  flex-direction: column;
  font-family: "Liberation Mono", monospace;
}

.job {
  margin: 3px 1px 0 2px;
  border: 1px solid #000;
  background: #9adbd9;
  font-size: 15px;
  line-height: 18px;
}

.job p {
  padding-left: 1px;
  white-space: nowrap;
}

.job p + p {
  border-top: 1px solid #000;
}

.matrix {
  margin: 2px 1px 2px 2px;
  padding: 2px;
  border: 1px solid #000;
  background: #6fd0bd;
}

.matrix button {
  display: block;
  width: 100%;
  padding-left: 2px;
  border: 2px solid #c8f0ec;
  border-right-color: #4a7f7a;
  border-bottom-color: #4a7f7a;
  background: #9adbd9;
  font-size: 15px;
  line-height: 17px;
  text-align: left;
}

.layers {
  width: 128px;
  border-top: 3px solid #2f6b5c;
  border-left: 4px solid #2f6b5c;
  border-right: 2px solid #a5ead8;
  border-bottom: 2px solid #a5ead8;
}

.panel {
  border: 1px solid #000;
  padding: 1px 2px 9px 1px;
  display: flex;
  flex-direction: column;
  gap: 3px;
}

.set {
  padding: 2px;
  background: #000;
  display: flex;
  flex-direction: column;
  gap: 2px;
}

.layer {
  height: 14px;
  display: flex;
  align-items: center;
}

.layer input {
  appearance: none;
  flex: none;
  width: 10px;
  height: 10px;
  margin: 2px 4px 2px 2px;
  border: 2px solid #000;
  background: #fff;
  box-shadow: 0 0 0 2px #fff;
}

.layer input:checked {
  border-color: #000080;
  box-shadow: 0 0 0 2px #000080;
}

.layer i {
  flex: none;
  width: 14px;
  height: 14px;
  margin-right: 2px;
}

.layer i.red {
  background: #f00;
}

.layer i.lime {
  background: #3f9400;
}

.layer span {
  flex: 1;
  min-width: 0;
  padding-left: 1px;
  overflow: hidden;
  background: #9adbd9;
  font-size: 12px;
  font-weight: bold;
  line-height: 14px;
  white-space: nowrap;
}

.layer .mark {
  flex: none;
  width: 12px;
  height: 14px;
  padding: 3px 3px 3px 1px;
  background: #9adbd9;
}

.layer .small {
  padding: 4px 2px 4px 4px;
}

.layer.green span,
.layer.green .mark {
  background: #00a47c;
}

.layer.amber span,
.layer.amber .mark {
  background: #fdc44c;
}

.layer.white span {
  background: #fff;
}

.layer.slate span {
  background: #98b2bd;
}

.layer.grey span {
  background: #d8d8d8;
}

.sidebar-end {
  margin-top: auto;
  height: 4px;
  border-top: 2px solid #a5ead8;
  border-bottom: 1px solid #000;
}

.canvas {
  flex: 1;
  min-width: 0;
  overflow: hidden;
  background: #000;
}

.canvas svg {
  display: block;
}

.tools {
  flex: none;
  width: 72px;
  display: flex;
  flex-direction: column;
  overflow: hidden;
  background: #000;
}

.tool-grid {
  width: 80px;
  display: grid;
  grid-template-columns: 38px 38px;
  gap: 2px;
  padding-top: 3px;
  border-bottom: 2px solid #4a8f84;
}

.tool-grid.plain {
  padding-bottom: 5px;
}

.tool-grid button {
  width: 38px;
  height: 38px;
  padding: 1px;
  border: 2px solid #c8f0ec;
  border-right-color: #4a7f7a;
  border-bottom-color: #4a7f7a;
  background: #9adbd9;
}

.tool-grid svg {
  display: block;
  width: 32px;
  height: 32px;
  border: 1px solid #000;
}

.tool-grid .alert {
  border-color: #d8141c;
}

.tool-grid.plain button {
  border-color: #eee #888 #888 #eee;
  background: #ccc;
}

.tool-grid.plain .gold {
  border-color: #ffe0a0 #a07820 #a07820 #ffe0a0;
  background: #fdc44c;
}

.overview {
  flex: 1;
  min-height: 0;
  overflow: hidden;
}

.status {
  flex: none;
  height: 25px;
  padding: 4px 0 0 3px;
  border-top: 3px solid #a5ead8;
  background: #55ceb0;
  font: bold 15px/20px "Liberation Mono", monospace;
}

/* Progress window */

.progress {
  position: absolute;
  top: 0;
  right: 0;
  width: 48px;
  height: 117px;
  overflow: hidden;
  box-shadow: 0 0 8px rgba(0, 0, 0, 0.3);
}

.progress .app-icon {
  width: 16px;
}

.progress-body {
  height: 94px;
  padding: 10px 0 0 5px;
  border: 2px solid #000;
  border-right: none;
  background: #9adbd9;
  font: bold 14px/20px "Liberation Serif", serif;
}

.progress-body p {
  margin-top: 13px;
  padding-left: 4px;
}

/* Excel window */

.excel {
  position: absolute;
  top: 55px;
  right: 56px;
  bottom: -14px;
  left: 591px;
  display: flex;
  flex-direction: column;
  border: 0 solid #f5f9ff;
  border-width: 0 1px;
  background: #bfdbff;
  color: #15428b;
  box-shadow: 0 0 10px rgba(0, 0, 0, 0.4);
}

.excel-title {
  flex: none;
  position: relative;
  height: 30px;
  background: #fff;
  display: flex;
  align-items: center;
}

/* round menu button hangs over the tab strip */
.office {
  position: absolute;
  top: 8px;
  left: 3px;
  z-index: 1;
  width: 37px;
  height: 37px;
  border: 1px solid #8f9bb0;
  border-radius: 50%;
  background: radial-gradient(circle at 50% 30%, #fff, #dfe5ef 55%, #b4c0d4);
  display: flex;
  align-items: center;
  justify-content: center;
}

.quick {
  margin-left: 38px;
  width: 105px;
  height: 22px;
  padding-left: 14px;
  border: 1px solid #b5bac2;
  border-left: none;
  border-radius: 0 11px 11px 0;
  display: flex;
  align-items: center;
  gap: 8px;
}

.quick button {
  display: flex;
  align-items: center;
  gap: 5px;
}

.more {
  margin-left: 7px;
  display: flex;
  flex-direction: column;
  align-items: center;
  gap: 2px;
}

.more i:first-child {
  width: 6px;
  height: 1px;
  background: #15428b;
}

.excel-title h1 {
  position: absolute;
  left: 50%;
  transform: translateX(-50%);
  color: #111;
  font: normal 13px/20px "Open Sans", "Noto Sans CJK SC", sans-serif;
  white-space: nowrap;
}

.excel-title .window-buttons {
  margin-right: 1px;
}

.tabs {
  flex: none;
  height: 27px;
  padding: 1px 0 0 48px;
  display: flex;
  gap: 1px;
}

.tabs a {
  padding: 0 14px;
  line-height: 24px;
}

.tabs .active {
  padding: 0 11px;
  margin-right: 3px;
  border-radius: 4px 4px 0 0;
  background: linear-gradient(#f4f9ff, #dfe9f6);
  box-shadow: 0 0 2px #5d95d8;
}

.doc-buttons {
  margin-left: auto;
  display: flex;
  align-items: center;
}

.doc-buttons button {
  width: 22px;
  display: flex;
  justify-content: center;
}

.ribbon {
  flex: none;
  height: 106px;
  padding: 3px 3px 3px 2px;
  margin-right: 2px;
  border: 1px solid #8db2e3;
  border-radius: 4px;
  background: linear-gradient(#dce6f3, #d0ddee 18%, #c6d7ec 20%, #d5e4f4 70%, #e3f4ff);
  display: flex;
  gap: 3px;
}

.group {
  flex: none;
  border: 1px solid #a8c4e4;
  border-radius: 3px;
  background: linear-gradient(#dee8f5, #d1dfee 18%, #c7d8ed 20%, #d8e6f5);
  box-shadow: 1px 1px 0 #f0f7ff;
  display: flex;
  flex-direction: column;
  overflow: hidden;
}

.clipboard {
  width: 112px;
}

.font {
  width: 234px;
}

.align {
  width: 229px;
}

.number {
  width: 136px;
}

.styles {
  width: 165px;
}

.cells {
  width: 134px;
}

.edit {
  width: 176px;
}

.group-body {
  flex: 1;
  display: flex;
  padding: 0 2px;
}

.styles .group-body,
.cells .group-body {
  padding-left: 1px;
}

.group footer {
  position: relative;
  flex: none;
  height: 19px;
  background: #c1d8f0;
  color: #3e6aaa;
  line-height: 20px;
  text-align: center;
}

.launch {
  position: absolute;
  top: 4px;
  right: 5px;
  width: 7px;
  height: 7px;
  border: 1px solid #7a98c0;
  border-right-color: #fff;
  border-bottom-color: #fff;
}

.launch::after {
  content: "";
  display: block;
  width: 4px;
  height: 4px;
  margin: 3px 0 0 3px;
  border-right: 1px solid #456fa8;
  border-bottom: 1px solid #456fa8;
}

.big {
  padding-top: 2px;
  display: flex;
  flex-direction: column;
  align-items: center;
  line-height: 17px;
  white-space: nowrap;
}

.big svg {
  height: 32px;
  margin-bottom: 4px;
}

.big > .caret {
  margin-top: 6px;
}

.clipboard .big {
  width: 42px;
}

.styles .big:nth-child(1) {
  width: 54px;
}

.styles .big:nth-child(2) {
  width: 60px;
}

.styles .big:nth-child(3) {
  width: 44px;
}

.cells .big {
  width: 42px;
}

.edit .big {
  width: 42px;
}

.sort-a,
.sort-z {
  font: bold 15px "Liberation Serif", serif;
  fill: #2f5fb5;
}

.sort-z {
  fill: #a52a2a;
}

.stack {
  padding-left: 3px;
}

.stack button {
  height: 22px;
  display: flex;
  align-items: center;
  gap: 4px;
  line-height: 20px;
  white-space: nowrap;
}

.edit .stack {
  width: 84px;
}

.rows {
  display: flex;
  flex-direction: column;
  justify-content: flex-start;
  gap: 10px;
}

.group-body.rows {
  padding: 10px 3px 0;
  gap: 12px;
}

.align .rows {
  padding: 10px 1px 0;
}

.line {
  height: 23px;
  display: flex;
  align-items: center;
  gap: 3px;
}

.combos {
  display: flex;
}

.combo {
  position: relative;
  height: 25px;
  border: 1px solid #b2c8e6;
  background: #e9f1fb;
}

.combo::after {
  content: "";
  position: absolute;
  top: 10px;
  right: 4px;
  border: 3px solid transparent;
  border-top: 4px solid #5b7fb4;
  border-bottom: 0;
  pointer-events: none;
}

.combo select {
  appearance: none;
  width: 100%;
  height: 100%;
  padding-left: 3px;
  color: #111;
}

.wide {
  width: 131px;
}

.narrow {
  width: 46px;
  border-left: none;
  font-size: 13px;
}

.full {
  width: 128px;
}

.set-buttons {
  height: 22px;
  border: 1px solid #a2bbdc;
  border-radius: 2px;
  background: linear-gradient(#dbe7f6, #c6d8ee 50%, #bcd1ea 52%, #d0e0f3);
  display: flex;
  overflow: hidden;
}

.set-buttons button {
  min-width: 22px;
  height: 20px;
  display: flex;
  align-items: center;
  justify-content: center;
  gap: 4px;
  color: #222;
}

.set-buttons button + button {
  border-left: 1px solid #b9cde6;
}

.set-buttons .on {
  background: linear-gradient(#f9c480, #fbab4c 45%, #fed56f);
}

.set-buttons .long {
  min-width: 32px;
}

.serif {
  font: bold 16px/18px "Liberation Serif", serif;
}

.set-buttons .resize {
  gap: 0;
}

.tip {
  align-self: flex-start;
  margin-top: 3px;
  border: 3px solid transparent;
  border-top: 0;
  border-bottom-color: #36c;
}

.flip {
  border-top: 3px solid #36c;
  border-bottom: 0;
}

.lesser {
  font-size: 13px;
}

.font-color {
  width: 33px;
}

.font-color span {
  width: 16px;
  border-bottom: 4px solid #e00;
  color: #2f5597;
  font: bold 15px/13px "Liberation Serif", serif;
}

.wen {
  width: 32px;
}

.wen span {
  font-size: 10px;
  line-height: 9px;
  color: #2a4a90;
}

.orient {
  width: 30px;
}

.set-buttons .orient {
  gap: 0;
}

.orient span {
  transform: rotate(-45deg);
  font: bold 11px/12px "Liberation Serif", serif;
}

.dec {
  font: bold 8px/8px "Liberation Sans", sans-serif;
  text-align: right;
}

.align .merge {
  padding-left: 5px;
}

.hot {
  height: 22px;
  padding: 0 3px;
  border: 1px solid #c09a58;
  border-radius: 2px;
  background: linear-gradient(#f8d3a0, #f9bd6d 45%, #fcd889);
  color: #333f5e;
  display: flex;
  align-items: center;
  gap: 3px;
  white-space: nowrap;
}

.hot .caret {
  margin-left: 2px;
}

.warning {
  flex: none;
  height: 44px;
  padding: 6px 5px 4px 3px;
  background: #c3d8f5;
  display: flex;
  gap: 7px;
  align-items: flex-start;
}

.warning-box {
  flex: 1;
  height: 33px;
  padding-left: 2px;
  border: 1px solid #9ebfe4;
  background: linear-gradient(#fff, #e2f1fd);
  display: flex;
  align-items: center;
}

.warning-box b {
  margin: 0 12px 0 11px;
}

.warning-box button {
  width: 70px;
  height: 21px;
  margin-left: 10px;
  border: 1px solid #a3bfe2;
  background: #fff;
}

.formula {
  flex: none;
  height: 24px;
  border-bottom: 3px solid #c3d8f5;
  background: #fff;
  display: flex;
  color: #000;
  font-family: "Liberation Serif", "Noto Sans CJK SC", serif;
  box-shadow: inset 0 1px 0 #6f93c0, inset 0 -1px 0 #6f93c0;
}

.name-box {
  width: 157px;
  display: flex;
  align-items: center;
  padding-right: 4px;
}

.name-box input {
  flex: 1;
  min-width: 0;
  padding-right: 6px;
  font-size: 16px;
  text-align: center;
}

.name-box .caret {
  border-width: 4px;
  border-top: 5px solid #000;
  border-bottom: 0;
}

.fx {
  width: 77px;
  margin: 1px 0;
  padding: 0 5px 0 4px;
  border: 1px solid #6f93c0;
  border-radius: 10px 0 0 10px;
  background: linear-gradient(#dce9f8, #a9c6ec);
  display: flex;
  align-items: center;
  justify-content: space-between;
  font-size: 15px;
}

.fx i {
  width: 9px;
  height: 9px;
  border-radius: 50%;
  background: #9db4d6;
}

.formula-text {
  flex: 1;
  min-width: 0;
  padding-left: 12px;
  font-size: 15px;
}

.formula button {
  width: 15px;
  margin: 1px 0;
  border: 1px solid #6f93c0;
  background: #cfe1f7;
}

.sheet {
  flex: 1;
  min-height: 0;
  display: flex;
  background: #fff;
}

.cells-view {
  flex: 1;
  min-width: 0;
  overflow: hidden;
}

table {
  table-layout: fixed;
  width: 1402px;
  border-spacing: 0;
  color: #000;
}

.w-head {
  width: 34px;
}

.w-a {
  width: 58px;
}

.w-b {
  width: 37px;
}

.w-c {
  width: 166px;
}

.w-d {
  width: 31px;
}

.w-e {
  width: 81px;
}

.w-f {
  width: 54px;
}

.w-g {
  width: 48px;
}

.w-h {
  width: 89px;
}

.w-i {
  width: 140px;
}

.w-j {
  width: 88px;
}

.w-k {
  width: 72px;
}

th {
  height: 20px;
  padding: 0;
  border-right: 1px solid #9eb6ce;
  border-bottom: 1px solid #9eb6ce;
  background: linear-gradient(#f8fafc, #d8dfe9);
  color: #2f4a6a;
  font: normal 16px/18px "Liberation Serif", serif;
}

thead .sel {
  border-color: #f29536;
  background: linear-gradient(#f8d797, #f2be5c);
}

.corner {
  background: #a9c4e9;
}

.corner i {
  display: block;
  width: 0;
  margin: 2px 4px 0 auto;
  border: 5px solid #e8f0fa;
  border-top-color: transparent;
  border-left-color: transparent;
}

tbody th {
  height: 40px;
  background: #e4ecf7;
  vertical-align: bottom;
}

tbody th.sel {
  border-color: #f29536;
  background: #ffd58d;
}

.first th {
  height: 44px;
}

td {
  padding: 0 2px;
  border-right: 1px solid #d0d7e5;
  border-bottom: 1px solid #d0d7e5;
  font-size: 13px;
  line-height: 20px;
  white-space: nowrap;
}

.ink {
  border-color: #000;
}

td span {
  font-family: "Liberation Mono", monospace;
  font-size: 12px;
}

.head {
  padding: 0;
  font-family: "Liberation Serif", "Noto Sans CJK SC", serif;
  font-size: 17px;
  font-weight: bold;
  line-height: 19px;
  text-align: center;
}

.cam {
  padding-top: 520px;
  vertical-align: top;
}

.no {
  font: bold 17px/20px "Liberation Serif", serif;
  text-align: center;
}

.warn {
  color: #d01010;
}

.active.ink {
  position: relative;
}

.active.ink::after {
  content: "";
  position: absolute;
  inset: 0;
  border: 1px solid #000;
  box-shadow: 0 0 0 1px #fff, 0 0 0 2px #000;
}

.link {
  font-size: 16px;
  line-height: 19px;
}

.link a {
  display: block;
  height: 38px;
  text-decoration: underline;
}

.link span {
  font-size: 13px;
  line-height: 16px;
}

.v-scroll {
  flex: none;
  width: 15px;
  padding-bottom: 4px;
  border-left: 1px solid #a9c4e9;
  background: #7795c4;
  display: flex;
  flex-direction: column;
  align-items: center;
}

.split {
  width: 13px;
  height: 6px;
  border: 1px solid #6f93c0;
  background: #fff;
}

.arrow {
  width: 0;
  height: 0;
  border: 5px solid transparent;
}

.up {
  margin: 9px 0 40px;
  border-top: 0;
  border-bottom-color: #3f5f93;
}

.down {
  margin-top: auto;
  border-bottom: 0;
  border-top-color: #2f4f88;
}

.left {
  border-left: 0;
  border-right-color: #3f5f93;
}

.right {
  margin-left: auto;
  border-right: 0;
  border-left-color: #3f5f93;
}

.v-thumb {
  width: 13px;
  height: 206px;
  border: 1px solid #5d7fb3;
  border-radius: 2px;
  background: linear-gradient(90deg, #f5f8fc, #c9d8ec);
  display: flex;
  align-items: center;
  justify-content: center;
}

.v-thumb i {
  width: 7px;
  height: 7px;
  background: repeating-linear-gradient(#7a8faf 0 1px, transparent 1px 2px);
}

.sheet-tabs {
  flex: none;
  height: 21px;
  border-top: 1px solid #6f93c0;
  background: #b8d0f0;
  display: flex;
  font-family: "Liberation Mono", "Noto Sans CJK SC", monospace;
  font-size: 13px;
  line-height: 18px;
  white-space: nowrap;
}

.steps {
  width: 64px;
  padding: 2px 6px 0;
  display: flex;
  justify-content: space-between;
}

.steps i {
  width: 0;
  height: 0;
  border: 4px solid transparent;
  border-left: 0;
  border-right-color: #3f5f93;
}

.steps i:nth-child(n + 3) {
  border-right: 0;
  border-left: 4px solid #3f5f93;
}

.sheet-tabs a {
  width: 79px;
  padding-left: 7px;
  border-left: 1px solid #8fa9cf;
  background: #d3e2f6;
}

.sheet-tabs .active {
  width: 46px;
  background: #fff;
}

.sheet-tabs .plain-tab {
  width: 70px;
}

.sheet-tabs .cut {
  width: 24px;
}

.h-scroll {
  flex: 1;
  margin-left: 6px;
  padding: 1px 20px 0 6px;
  background: #7795c4;
  display: flex;
}

.h-thumb {
  width: 96px;
  height: 17px;
  margin-left: 6px;
  border-radius: 2px;
  background: linear-gradient(#fbfcfe, #c9d8ec);
}
```
